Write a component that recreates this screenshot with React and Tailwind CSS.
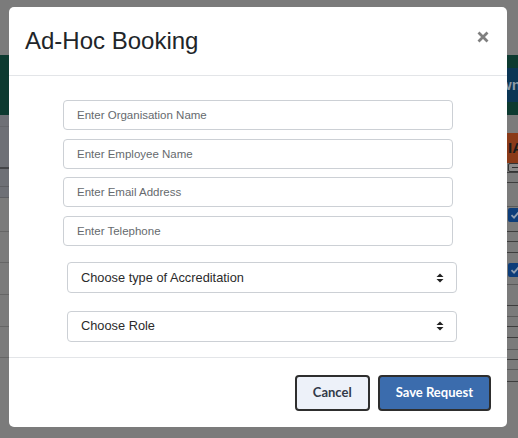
import React from "react";

const leftRows = [
  "h-[12px] bg-[#6e7076] border-b border-[#65666b]",
  "h-[42px] bg-[#6e7076] border-b-2 border-[#444548]",
  "h-[18px] bg-[#6e7076] border-b border-[#5e5f63]",
  "h-[11px] bg-[#6e7076] border-b border-[#5e5f63]",
  "h-[34px] border-b border-[#666666]",
  "h-[31px] border-b border-[#666666]",
  "h-[32px] border-b border-[#666666]",
  "h-[32px] border-b border-[#666666]",
  "h-[31px] border-b border-[#666666]",
  "h-[80px]",
];

const rightRows = [
  { c: "h-[18px]" },
  { c: "h-[30px] bg-[#8a3a18]", t: "IA" },
  { c: "h-[10px] border-b border-[#3e3e3e]", dash: true },
  { c: "h-[10px] border-b border-[#3e3e3e]" },
  { c: "h-[24px] border-b border-[#5a5a5a]" },
  { c: "h-[15px]", check: true },
  { c: "h-[10px] border-b border-[#3e3e3e]" },
  { c: "h-[10px] border-b border-[#3e3e3e]" },
  { c: "h-[11px] border-b border-[#3e3e3e]" },
  { c: "h-[10px]" },
  { c: "h-[14px]", check: true },
  { c: "h-[8px] border-b border-[#5a5a5a]" },
  { c: "h-[21px] border-b border-[#3e3e3e]" },
  { c: "h-[11px] border-b border-[#5a5a5a]" },
  { c: "h-[10px] border-b border-[#3e3e3e]" },
  { c: "h-[11px] border-b border-[#3e3e3e]" },
  { c: "h-[12px] border-b border-[#5a5a5a]" },
  { c: "h-[10px] border-b border-[#3e3e3e]" },
  { c: "h-[10px] border-b border-[#5a5a5a]" },
  { c: "h-[12px] border-b border-[#3e3e3e]" },
  { c: "h-[60px]" },
];

function SelectArrows() {
  return (
    <svg width="8" height="10" viewBox="0 0 8 10" className="shrink-0">
      <path d="M4 0.5 L7.5 4 L0.5 4 Z" fill="#222" />
      <path d="M0.5 6 L7.5 6 L4 9.5 Z" fill="#222" />
    </svg>
  );
}

function Input({ placeholder }) {
  return (
    <input
      type="text"
      placeholder={placeholder}
      className="h-[30px] w-[390px] rounded-[4px] border border-[#ccd0d5] bg-white pl-[13px] text-[11.5px] text-[#333] outline-none placeholder:text-[#666a6e] [font-family:'Liberation_Sans',Arial,sans-serif]"
    />
  );
}

function Select({ label }) {
  return (
    <div className="flex h-[31px] w-[390px] items-center justify-between rounded-[4px] border border-[#ccd0d5] bg-white pl-[13px] pr-[12px]">
      <span className="text-[12.8px] text-[#2b2b2b] [font-family:'Liberation_Sans',Arial,sans-serif]">
        {label}
      </span>
      <SelectArrows />
    </div>
  );
}

export default function App() {
  return (
    <div className="relative h-[438px] w-[518px] overflow-hidden bg-[#7b7b7b]">
      {/* background page */}
      <div className="h-[55px]" />
      <div className="flex h-[60px] items-center justify-end bg-[#0d3a30]">
        <div className="flex h-[34px] w-[25px] items-center overflow-hidden whitespace-nowrap bg-[#0b3554] pl-[7px] text-[15px] font-bold text-[#8d9aa6] [font-family:'Liberation_Sans',Arial,sans-serif]">
          wn
        </div>
      </div>
      <div className="flex">
        <div className="flex w-[9px] flex-col">
          {leftRows.map((c, i) => (
            <div key={i} className={c} />
          ))}
        </div>
        <div className="flex-1" />
        <div className="flex w-[11px] flex-col">
          {rightRows.map((r, i) => (
            <div key={i} className={"flex items-center overflow-hidden " + r.c}>
              {r.t && (
                <span className="pl-[1px] text-[15px] font-bold text-[#1a1a1a] [font-family:'Liberation_Sans',Arial,sans-serif]">
                  {r.t}
                </span>
              )}
              {r.dash && (
                <div className="ml-[1px] flex h-[9px] w-[14px] shrink-0 items-center justify-center rounded-[2px] border border-[#333] bg-[#8a8a8a]">
                  <div className="h-[1.5px] w-[7px] bg-[#333]" />
                </div>
              )}
              {r.check && (
                <div className="ml-[1px] flex h-[14px] w-[14px] shrink-0 items-center justify-center rounded-[2px] bg-[#0d3d7a]">
                  <svg width="10" height="10" viewBox="0 0 10 10">
                    <path d="M1.5 5.2 L4 7.6 L8.6 2.4" stroke="#8f9db0" strokeWidth="1.8" fill="none" />
                  </svg>
                </div>
              )}
            </div>
          ))}
        </div>
      </div>

      {/* modal */}
      <div className="absolute inset-0 pt-[7px]">
        <div className="ml-[9px] w-[498px] rounded-[5px] bg-white">
          <div className="flex h-[69px] items-start justify-between border-b border-[#e3e5e8] px-4 pt-4">
            <h4 className="text-[24px] leading-[36px] font-medium text-[#212529] [font-family:'Liberation_Sans',Arial,sans-serif]">
              Ad-Hoc Booking
            </h4>
            <svg width="12" height="12" viewBox="0 0 12 12" className="mr-[2px] mt-[8px]">
              <path d="M1.5 1.5 L10.5 10.5 M10.5 1.5 L1.5 10.5" stroke="#7f7f7f" strokeWidth="2.8" />
            </svg>
          </div>
          <div className="flex flex-col pb-[15.5px] pt-[24px]">
            <div className="ml-[54px] flex flex-col gap-[8.5px]">
              <Input placeholder="Enter Organisation Name" />
              <Input placeholder="Enter Employee Name" />
              <Input placeholder="Enter Email Address" />
              <Input placeholder="Enter Telephone" />
            </div>
            <div className="ml-[58px] mt-[16.5px] flex flex-col gap-[17.5px]">
              <Select label="Choose type of Accreditation" />
              <Select label="Choose Role" />
            </div>
          </div>
          <div className="flex justify-end gap-2 border-t border-[#e3e5e8] px-4 pb-4 pt-[17px]">
            <button className="h-[36px] rounded-[4px] border-2 border-[#2e2e2e] bg-[#edf1f9] px-4 text-[13px] font-bold text-[#323a48] [font-family:Lato,sans-serif]">
              Cancel
            </button>
            <button className="h-[36px] rounded-[4px] border-2 border-[#2e2e2e] bg-[#3b6cad] px-4 text-[13px] font-bold text-white [font-family:Lato,sans-serif]">
              Save Request
            </button>
          </div>
        </div>
      </div>
    </div>
  );
}
